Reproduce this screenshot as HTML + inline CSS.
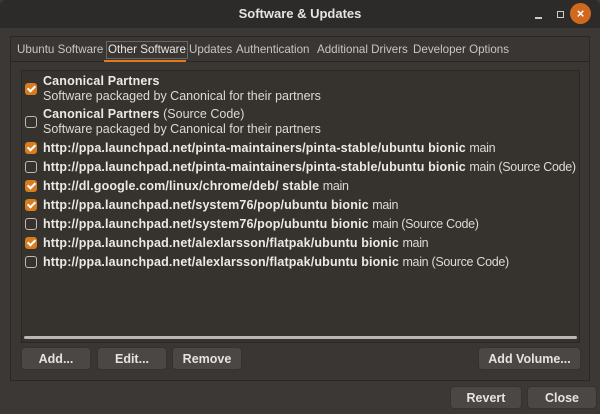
<!DOCTYPE html>
<html><head><style>
*{margin:0;padding:0;box-sizing:border-box}
body{width:600px;height:414px;background:#3b3835;font-family:"Liberation Sans",sans-serif;color:#dcdad5;position:relative;overflow:hidden;font-size:12.5px}
.title{position:absolute;left:0;top:0;width:600px;height:28px;background:#2d2b29;border-radius:6px 6px 0 0}
.title .t{position:absolute;left:0;right:0;top:6px;text-align:center;font-weight:bold;font-size:13px;color:#e6e4e0}
.close{position:absolute;left:570px;top:3px;width:21px;height:21px;border-radius:50%;background:#d0681e;color:#fff;text-align:center;line-height:21px;font-size:13px;font-weight:bold}
.min{position:absolute;left:535px;top:17px;width:7px;height:2px;background:#ccc}
.max{position:absolute;left:557px;top:11px;width:7px;height:7px;border:1.5px solid #ccc}
.nb{position:absolute;left:10px;top:36px;width:580px;height:345px;border:1px solid #2a2826;background:#393633}
.tabs{position:absolute;left:10px;top:36px;width:580px;height:26px;border-bottom:1px solid #2a2826}
.tab{position:absolute;top:43px;font-size:11.6px;color:#c9c6c0;white-space:nowrap}
.sel{border:1px solid #6a6763;padding:0 1px;color:#e8e6e2;top:41px;line-height:16px}
.ul{position:absolute;left:104px;top:60px;width:82px;height:2px;background:#e07a1f}
.list{position:absolute;left:21px;top:70px;width:559px;height:273px;background:#36332f;border:1px solid #2a2826}
.row{position:absolute;left:43px;white-space:nowrap;font-size:12.5px}
.row b{letter-spacing:0.15px}
.u{letter-spacing:-0.3px}
.cb{position:absolute;left:25px;width:12px;height:12px;border-radius:3px}
.on{background:#d77d20}
.on::after{content:"";position:absolute;left:3.5px;top:1px;width:3px;height:6px;border:solid #fff;border-width:0 2px 2px 0;transform:rotate(45deg)}
.off{border:1.5px solid #bdbab4}
b{color:#eceae6}
.sb{position:absolute;left:24px;top:336px;width:553px;height:3px;background:#bab7b2;border-radius:2px}
.btn{position:absolute;height:23px;background:#4a4744;border-radius:4px;text-align:center;line-height:23px;font-weight:bold;font-size:12.5px;color:#e6e4e0;border:1px solid #35322f}
</style></head><body>
<div class="title"><div class="t">Software &amp; Updates</div><div class="min"></div><div class="max"></div><div class="close">×</div></div>
<div class="nb"></div>
<div class="tabs"></div>
<div class="tab" style="left:17px">Ubuntu Software</div>
<div class="tab sel" style="left:106px">Other Software</div>
<div class="tab" style="left:189px">Updates</div>
<div class="tab" style="left:236px">Authentication</div>
<div class="tab" style="left:317px">Additional Drivers</div>
<div class="tab" style="left:413px">Developer Options</div>
<div class="ul"></div>
<div class="list"></div>
<div class="cb on" style="top:83px"></div>
<div class="row" style="top:74px"><b>Canonical Partners</b></div>
<div class="row" style="top:89px">Software packaged by Canonical for their partners</div>
<div class="cb off" style="top:116px"></div>
<div class="row" style="top:107px"><b>Canonical Partners</b> (Source Code)</div>
<div class="row" style="top:122px">Software packaged by Canonical for their partners</div>
<div class="cb on" style="top:142px"></div>
<div class="row" style="top:141px"><b>http://ppa.launchpad.net/pinta-maintainers/pinta-stable/ubuntu bionic</b> <span class="u">main</span></div>
<div class="cb off" style="top:161px"></div>
<div class="row" style="top:160px"><b>http://ppa.launchpad.net/pinta-maintainers/pinta-stable/ubuntu bionic</b> <span class="u">main (Source Code)</span></div>
<div class="cb on" style="top:180px"></div>
<div class="row" style="top:179px"><b>http://dl.google.com/linux/chrome/deb/ stable</b> <span class="u">main</span></div>
<div class="cb on" style="top:199px"></div>
<div class="row" style="top:198px"><b>http://ppa.launchpad.net/system76/pop/ubuntu bionic</b> <span class="u">main</span></div>
<div class="cb off" style="top:218px"></div>
<div class="row" style="top:217px"><b>http://ppa.launchpad.net/system76/pop/ubuntu bionic</b> <span class="u">main (Source Code)</span></div>
<div class="cb on" style="top:237px"></div>
<div class="row" style="top:236px"><b>http://ppa.launchpad.net/alexlarsson/flatpak/ubuntu bionic</b> <span class="u">main</span></div>
<div class="cb off" style="top:256px"></div>
<div class="row" style="top:255px"><b>http://ppa.launchpad.net/alexlarsson/flatpak/ubuntu bionic</b> <span class="u">main (Source Code)</span></div>
<div class="sb"></div>
<div class="btn" style="left:21px;top:347px;width:70px">Add...</div>
<div class="btn" style="left:97px;top:347px;width:70px">Edit...</div>
<div class="btn" style="left:172px;top:347px;width:70px">Remove</div>
<div class="btn" style="left:478px;top:347px;width:103px">Add Volume...</div>
<div class="btn" style="left:450px;top:386px;width:72px">Revert</div>
<div class="btn" style="left:527px;top:386px;width:70px">Close</div>
</body></html>
